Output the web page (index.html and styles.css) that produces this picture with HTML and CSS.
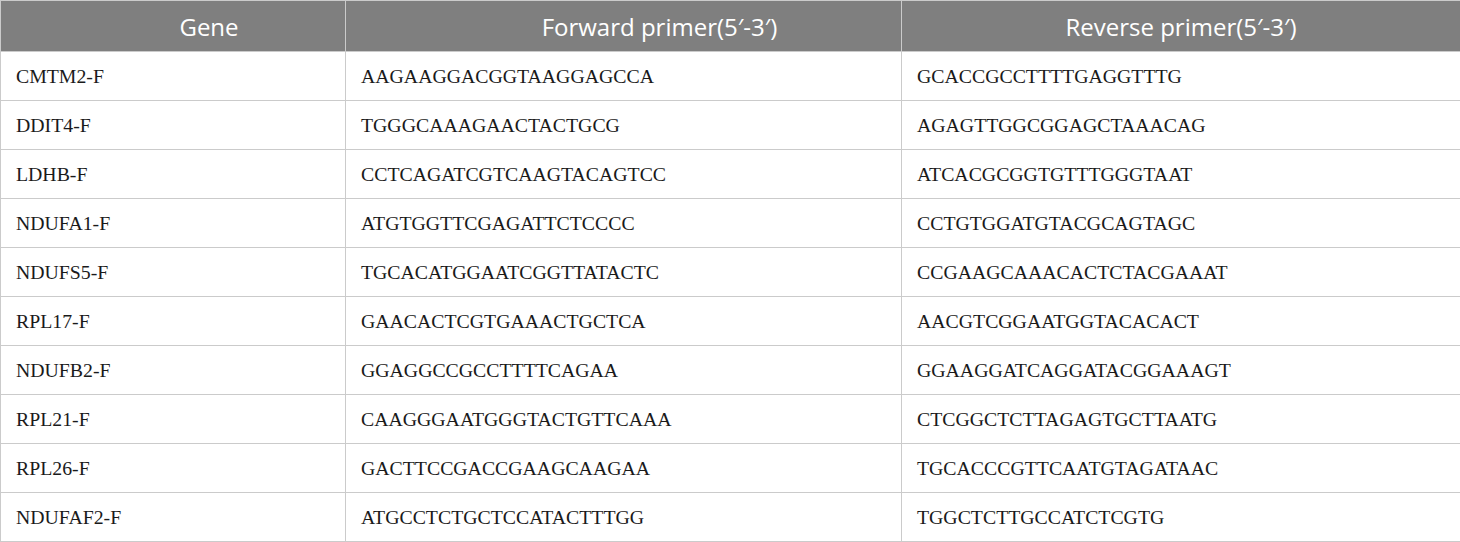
FILE: index.html
```html
<!DOCTYPE html>
<html lang="en">
<head>
<meta charset="utf-8">
<title>Primers</title>
<link rel="stylesheet" href="styles.css">
</head>
<body>
<table class="primers">
  <colgroup>
    <col class="c-gene">
    <col class="c-fwd">
    <col class="c-rev">
  </colgroup>
  <thead>
    <tr><th class="shift">Gene</th><th class="shift">Forward primer(5′-3′)</th><th>Reverse primer(5′-3′)</th></tr>
  </thead>
  <tbody>
    <tr><td>CMTM2-F</td><td>AAGAAGGACGGTAAGGAGCCA</td><td>GCACCGCCTTTTGAGGTTTG</td></tr>
    <tr><td>DDIT4-F</td><td>TGGGCAAAGAACTACTGCG</td><td>AGAGTTGGCGGAGCTAAACAG</td></tr>
    <tr><td>LDHB-F</td><td>CCTCAGATCGTCAAGTACAGTCC</td><td>ATCACGCGGTGTTTGGGTAAT</td></tr>
    <tr><td>NDUFA1-F</td><td>ATGTGGTTCGAGATTCTCCCC</td><td>CCTGTGGATGTACGCAGTAGC</td></tr>
    <tr><td>NDUFS5-F</td><td>TGCACATGGAATCGGTTATACTC</td><td>CCGAAGCAAACACTCTACGAAAT</td></tr>
    <tr><td>RPL17-F</td><td>GAACACTCGTGAAACTGCTCA</td><td>AACGTCGGAATGGTACACACT</td></tr>
    <tr><td>NDUFB2-F</td><td>GGAGGCCGCCTTTTCAGAA</td><td>GGAAGGATCAGGATACGGAAAGT</td></tr>
    <tr><td>RPL21-F</td><td>CAAGGGAATGGGTACTGTTCAAA</td><td>CTCGGCTCTTAGAGTGCTTAATG</td></tr>
    <tr><td>RPL26-F</td><td>GACTTCCGACCGAAGCAAGAA</td><td>TGCACCCGTTCAATGTAGATAAC</td></tr>
    <tr><td>NDUFAF2-F</td><td>ATGCCTCTGCTCCATACTTTGG</td><td>TGGCTCTTGCCATCTCGTG</td></tr>
  </tbody>
</table>
</body>
</html>
```
FILE: styles.css
```css
html, body {
  margin: 0;
  padding: 0;
  background: #ffffff;
}

.primers {
  width: 1460px;
  border-collapse: collapse;
  table-layout: fixed;
}

.c-gene { width: 345px; }
.c-fwd { width: 556px; }
.c-rev { width: 559px; }

.primers th,
.primers td {
  border: 1px solid #cbcbcb;
  padding: 0 15px;
  text-align: left;
  vertical-align: middle;
}

.primers th {
  height: 50px;
  background: #7f7f7f;
  color: #ffffff;
  font-family: "Open Sans", "Noto Sans", sans-serif;
  font-size: 24px;
  font-weight: 400;
  text-align: center;
}

.primers th.shift {
  padding-left: 87px;
}

.primers td {
  height: 48px;
  color: #1a1a1a;
  font-family: "Liberation Serif", "Times New Roman", serif;
  font-size: 19.8px;
}
```
